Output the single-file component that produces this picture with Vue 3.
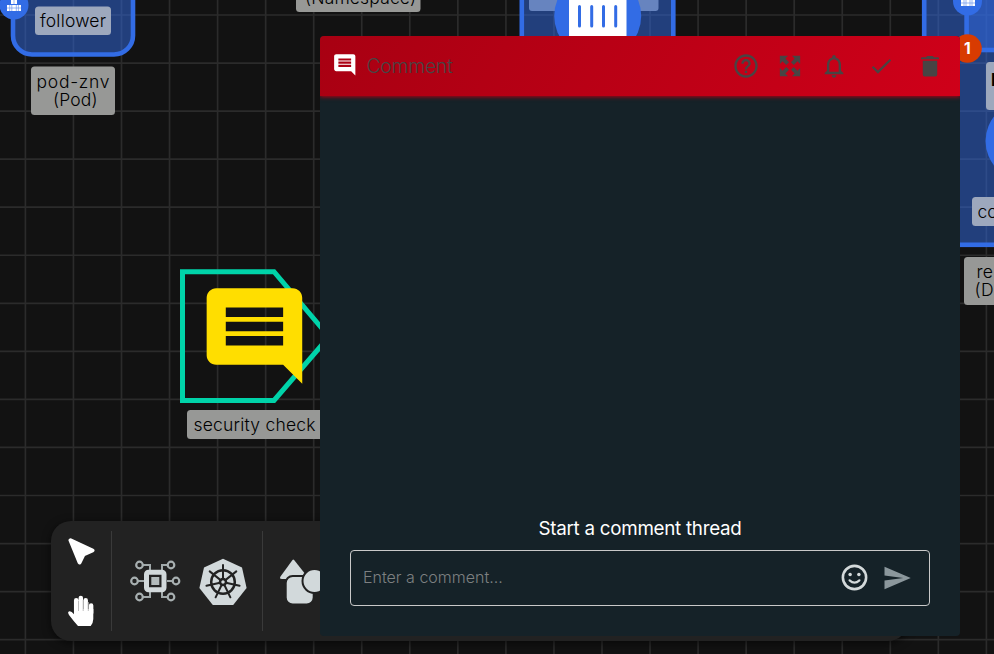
<script setup>
const cols = Array.from({ length: 21 }, (_, i) => 25.4 + i * 48.05)
const rows = Array.from({ length: 14 }, (_, i) => 15 + i * 48.05)
const commentPath = 'M21.99 4c0-1.1-.89-2-1.99-2H4c-1.1 0-2 .9-2 2v12c0 1.1.9 2 2 2h14l4 4-.01-18zM18 14H6v-2h12v2zm0-3H6V9h12v2zm0-3H6V6h12v2z'
const labels = [
  { x: 35, y: 6.5, w: 76, h: 28.5, lines: [['follower', 40, 26.5, 66]], blue: true },
  { x: 31, y: 66.5, w: 84, h: 48.5, lines: [['pod-znv', 36.5, 87.5, 73], ['(Pod)', 53, 106, 44.5]] },
  { x: 296, y: -36, w: 124.5, h: 48, lines: [['(Namespace)', 305, 4, 111]] },
  { x: 187, y: 410, w: 140, h: 29, lines: [['security check', 193.5, 430.5, 122]] },
  { x: 986, y: 62, w: 60, h: 48, lines: [['k', 991, 86, 10]], blue: true },
  { x: 972, y: 197, w: 70, h: 29, lines: [['co', 977.5, 217.5, 20]], blue: true },
  { x: 964, y: 257, w: 80, h: 48, lines: [['re', 976.5, 278, 16.5], ['(D', 974.5, 296, 19]] }
]
const spokes = Array.from({ length: 7 }, (_, i) => (i * 360) / 7)
const actions = [
  { name: 'Help', cls: 'help', d: 'M11 18h2v-2h-2v2zm1-16C6.48 2 2 6.48 2 12s4.48 10 10 10 10-4.48 10-10S17.52 2 12 2zm0 18c-4.41 0-8-3.59-8-8s3.59-8 8-8 8 3.59 8 8-3.59 8-8 8zm0-14c-2.21 0-4 1.79-4 4h2c0-1.1.9-2 2-2s2 .9 2 2c0 2-3 1.75-3 5h2c0-2.25 3-2.5 3-5 0-2.21-1.79-4-4-4z' },
  { name: 'Expand', cls: 'expand', d: 'M3.3 3.3H10.3L8 5.6l3.2 3.2-2.4 2.4L5.6 8 3.3 10.3zM20.7 3.3V10.3L18.4 8l-3.2 3.2-2.4-2.4L16 5.6 13.7 3.3zM20.7 20.7H13.7L16 18.4l-3.2-3.2 2.4-2.4 3.2 3.2 2.3-2.3zM3.3 20.7V13.7L5.6 16l3.2-3.2 2.4 2.4L8 18.4l2.3 2.3z' },
  { name: 'Notify', cls: 'bell', d: 'M12 22c1.1 0 2-.9 2-2h-4c0 1.1.9 2 2 2zm6-6v-5c0-3.07-1.63-5.64-4.5-6.32V4c0-.83-.67-1.5-1.5-1.5s-1.5.67-1.5 1.5v.68C7.64 5.36 6 7.92 6 11v5l-2 2v1h16v-1l-2-2zm-2 1H8v-6c0-2.48 1.51-4.5 4-4.5s4 2.02 4 4.5v6z' },
  { name: 'Resolve', cls: 'check', d: 'M9 16.17 4.83 12l-1.42 1.41L9 19 21 7l-1.41-1.41z' },
  { name: 'Delete', cls: 'trash', d: 'M5.8 7.5h12.4v11.8q0 1.7-1.7 1.7h-9q-1.7 0-1.7-1.7zM5 4.6h3.7Q9.2 3.5 10 3.5h4q.8 0 1.3 1.1H19q.8 0 .8 1.7H4.2Q4.2 4.6 5 4.6z' }
]
</script>

<template>
  <main class="app">
    <svg class="canvas" viewBox="0 0 994 654">
      <g class="grid">
        <line v-for="x in cols" :key="'c' + x" :x1="x" :x2="x" y1="0" y2="654" />
        <line v-for="y in rows" :key="'r' + y" x1="0" x2="994" :y1="y" :y2="y" />
      </g>

      <rect class="node" x="13" y="-60" width="120" height="114.5" rx="19" />
      <circle class="solid" cx="14" cy="5" r="14.5" />
      <g class="white">
        <rect x="11" y="-1" width="6" height="5" />
        <rect x="7" y="5" width="14" height="6" />
      </g>
      <path class="cubes" d="M7 8h14M9.7 5v6M11.8 5v6M16.3 5v6M18.4 5v6M14 0v4" />

      <rect class="node" x="521.8" y="-20" width="151.5" height="200" />
      <rect class="pale" x="529" y="-20" width="129.5" height="31" rx="3" />
      <ellipse class="solid" cx="597.7" cy="16" rx="43.5" ry="43" />
      <rect class="white" x="569" y="-10" width="57.5" height="60" />
      <path class="bars" d="M579.5 6.5v19.5M591.7 6.5v19.5M603.5 6.5v19.5M615.7 6.5v19.5" />

      <rect class="node" x="924.2" y="-20" width="120" height="264.8" />
      <rect class="node" x="966.6" y="-20" width="120" height="70" />
      <circle class="solid" cx="967.5" cy="1" r="14.5" />
      <rect class="white" x="961" y="0" width="14" height="6" />
      <path class="cubes" d="M961 3h14M964 0v6M966 0v6M970 0v6M972 0v6" />
      <circle class="solid" cx="1025" cy="141" r="39.5" />
      <circle class="badge" cx="967.5" cy="48.5" r="14.3" />
      <text class="count" x="964" y="54">1</text>

      <path class="tag" d="M182.5 271.7h91.5l55 65-55 63.8h-91.5z" />
      <path class="comment" transform="translate(197.1 278.7) scale(4.78)" :d="commentPath" />

      <g v-for="l in labels" :key="l.x">
        <rect :class="['label', { blue: l.blue }]" :x="l.x" :y="l.y" :width="l.w" :height="l.h" rx="3.5" />
        <text v-for="t in l.lines" :key="t[0]" :class="{ heavy: t[0] === 'k' }" :x="t[1]" :y="t[2]" :textLength="t[3]">{{ t[0] }}</text>
      </g>
    </svg>

    <nav class="dock">
      <div class="tools">
        <svg width="28" height="28" viewBox="0 0 28 28">
          <path class="round" d="M3.5 3.3 25.5 13.5 16.5 17.3 12.6 25.5z" />
        </svg>
        <svg width="28" height="32" viewBox="0 0 28 32">
          <path class="fingers" d="M8.2 19V5.3M12.8 18V3M17.7 18V5.3M23.1 18V10.5" />
          <path class="white" d="M6 14h19.3v10q0 3.5-2.6 7H10Q5.5 26 1 20q-2-3.5.5-3.8 2-.2 4.5 3z" />
          <path class="creases" d="M10.5 6v10M15.2 5v11M20.3 7v9" />
        </svg>
      </div>
      <svg class="chip" width="54" height="48" viewBox="0 0 54 48">
        <path class="wires" d="M13 8h8v6M42 8h-9v6M8 24h8M38 24h8M13 40h8v-6M42 40h-9v-6" />
        <g class="ports">
          <circle cx="10.5" cy="8" r="3.3" /><circle cx="42" cy="8" r="3.3" />
          <circle cx="5.5" cy="24" r="3.3" /><circle cx="47" cy="24" r="3.3" />
          <circle cx="10.5" cy="40" r="3.3" /><circle cx="42" cy="40" r="3.3" />
        </g>
        <rect class="core" x="17.5" y="15.2" width="17.5" height="17.6" rx="2" />
        <rect class="die" x="22.3" y="20" width="8" height="8" />
      </svg>
      <svg class="helm" width="50" height="50" viewBox="-25 -25 50 50">
        <path class="light" d="M0-23.2 19-14.5 23.6 6 10.2 23H-10.2L-23.6 6-19-14.5z" />
        <g class="wheel">
          <circle r="11.8" />
          <circle r="3" />
          <line v-for="a in spokes" :key="a" y1="-3" y2="-17" :transform="`rotate(${a})`" />
        </g>
      </svg>
      <div class="shapes">
        <svg width="48" height="48" viewBox="0 0 48 48">
          <path class="light" d="M14.5 3Q15.3 2 16.1 3L28 18q1.5 4-2 4H4q-3 0-1.5-2.5z" />
          <rect class="outlined" x="7.7" y="19" width="28" height="28.5" rx="7" />
          <circle class="outlined" cx="36.5" cy="24" r="12" />
        </svg>
      </div>
    </nav>

    <section class="dialog">
      <header>
        <svg class="lead" width="25.5" height="25.5" viewBox="0 0 24 24"><path :d="commentPath" /></svg>
        <h1>Comment</h1>
        <button v-for="a in actions" :key="a.name" :class="a.cls">
          <svg viewBox="0 0 24 24"><path :d="a.d" /></svg>
        </button>
      </header>
      <div class="body">
        <p>Start a comment thread</p>
        <div class="field">
          <input placeholder="Enter a comment..." />
          <svg class="smile" width="31" height="31" viewBox="0 0 24 24">
            <circle cx="12" cy="12" r="9" />
            <path d="M8.2 14.2q3.8 3.4 7.6 0" />
            <circle class="eye" cx="8.6" cy="9.7" r="1.35" /><circle class="eye" cx="15.4" cy="9.7" r="1.35" />
          </svg>
          <svg class="send" width="30" height="30" viewBox="0 0 24 24"><path d="M2.01 21 23 12 2.01 3 2 10l15 2-15 2z" /></svg>
        </div>
      </div>
    </section>
  </main>
</template>

<style>
body { background: #121212; overflow: hidden; }
</style>

<style scoped>
.app { position: relative; width: 994px; height: 654px; overflow: hidden; background: #121212; font-family: Inter, "Liberation Sans", sans-serif; }
.canvas { display: block; width: 994px; height: 654px; }
.grid line { stroke: #2b2b2b; stroke-width: 1.7; }
.node { fill: rgba(50, 108, 229, .5); stroke: #326ce5; stroke-width: 4.6; }
.solid { fill: #326ce5; }
.white { fill: #fff; }
.pale { fill: #6784bf; }
.cubes { stroke: #6e96ec; stroke-width: .7; fill: none; }
.bars { stroke: #326ce5; stroke-width: 3; stroke-linecap: round; }
.badge { fill: #d83b01; }
.tag { fill: none; stroke: #00d3a9; stroke-width: 5; }
.comment { fill: #ffde00; }
.label { fill: #979896; }
.label.blue { fill: #9da8bd; }
.canvas text { font-size: 17.5px; font-weight: 300; fill: #000; }
.canvas .heavy { font-weight: 700; }
.canvas .count { font-size: 15.5px; font-weight: 700; fill: #fff; }

.dock { position: absolute; left: 51px; top: 521px; width: 857px; height: 120px; display: flex; align-items: center; background: #222; border-radius: 20px; box-shadow: 0 2px 8px rgba(0, 0, 0, .6); }
.tools { width: 60px; height: 100px; display: flex; flex-direction: column; align-items: center; justify-content: space-between; border-right: 1px solid #3a3a3a; }
.tools svg { margin: 0 0 4px 1px; }
.tools svg:first-child { margin: 6px 0 0; }
.round { fill: #fff; stroke: #fff; stroke-width: 4; stroke-linejoin: round; }
.fingers { stroke: #fff; stroke-width: 4.5; stroke-linecap: round; fill: none; }
.creases { stroke: #b8b8b8; stroke-width: .9; }
.chip { margin-left: 16.5px; flex: none; }
.wires { fill: none; stroke: #a1a9aa; stroke-width: 2; }
.ports circle { fill: #222; stroke: #a8b0b1; stroke-width: 2.2; }
.core { fill: #222; stroke: #d2d9db; stroke-width: 5; }
.die { fill: #b3bbbc; }
.helm { margin-left: 15px; margin-top: 1px; flex: none; }
.light { fill: #d2d9db; }
.wheel { fill: none; stroke: #222; stroke-width: 2.5; }
.wheel line { stroke-width: 2; stroke-linecap: round; }
.shapes { margin-left: 14.5px; height: 100px; padding-left: 15px; display: flex; align-items: center; border-left: 1px solid #3a3a3a; }
.outlined { fill: #d2d9db; stroke: #222; stroke-width: 2; }

.dialog { position: absolute; left: 320px; top: 36px; width: 640px; height: 600px; display: flex; flex-direction: column; background: #152228; border-radius: 4px; overflow: hidden; }
header { height: 60px; flex: none; box-sizing: border-box; display: flex; align-items: center; padding-left: 12px; background: linear-gradient(120deg, #a80012, #cf0019); box-shadow: 0 1px 4px #b00014; }
.lead { fill: #fff; margin-top: -2px; }
h1 { margin: 0 auto 0 9px; font-size: 19.5px; font-weight: 300; letter-spacing: -.35px; color: #484444; }
button { padding: 0; border: 0; background: none; display: flex; justify-content: center; }
button svg { width: 28px; height: 28px; fill: #484444; display: block; }
.help { width: 44px; }
.expand { width: 43px; }
.bell { width: 46px; }
.check { width: 48px; }
.check svg { width: 26.5px; }
.trash { width: 50px; margin-right: 5px; }
.body { flex: 1; display: flex; flex-direction: column; justify-content: flex-end; padding: 0 30px 30px; }
p { margin: 0 0 8px; text-align: center; color: #fff; font-size: 18.8px; line-height: 26px; letter-spacing: -.27px; }
.field { height: 56px; box-sizing: border-box; border: 1px solid #c9c9c9; border-radius: 4px; display: flex; align-items: center; padding: 0 17px 1px 12px; }
input { flex: 1; min-width: 0; padding: 0 0 1px; border: 0; outline: 0; background: none; font: 300 16px Inter, sans-serif; color: #fff; }
input::placeholder { color: #7d8081; opacity: 1; }
.smile { fill: none; stroke: #d3d9da; stroke-width: 2; margin-right: 12px; }
.smile path { stroke-width: 1.7; stroke-linecap: round; }
.smile .eye { fill: #d3d9da; stroke: none; }
.send { fill: #8b979c; }
</style>
